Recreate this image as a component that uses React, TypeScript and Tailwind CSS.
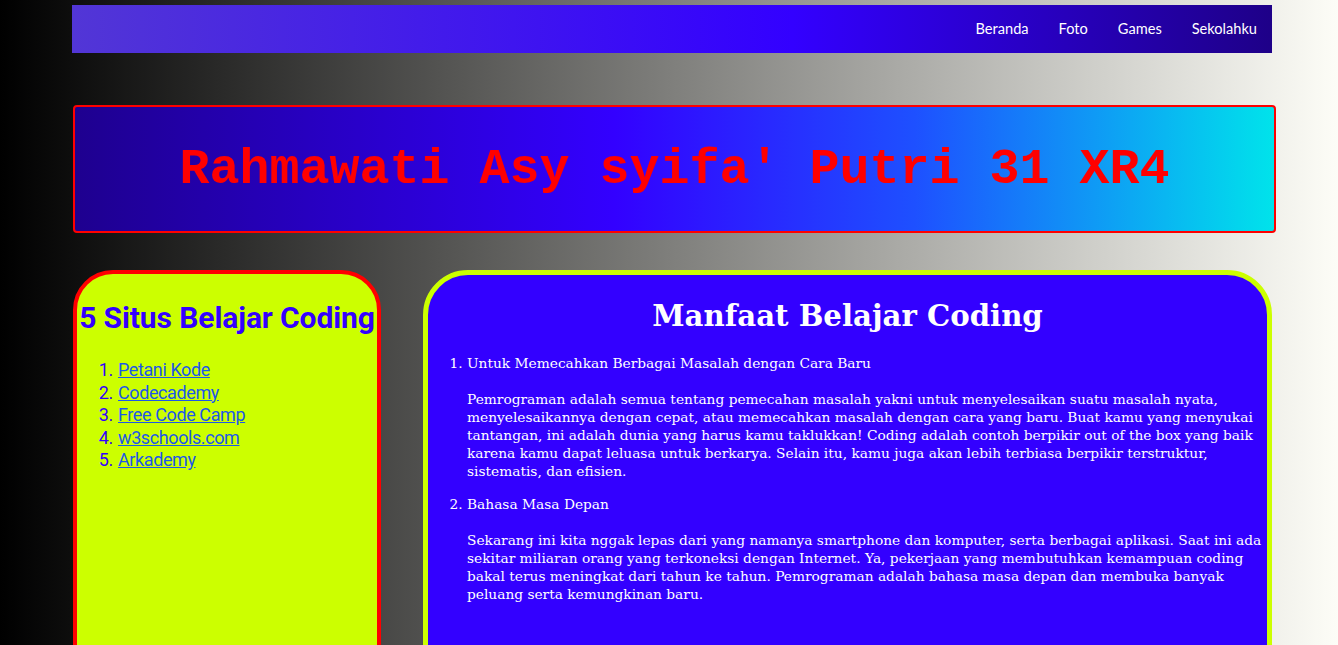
const navLinks = ["Beranda", "Foto", "Games", "Sekolahku"];

const sites = ["Petani Kode", "Codecademy", "Free Code Camp", "w3schools.com", "Arkademy"];

const App = () => {
  return (
    <div className="min-h-[645px] overflow-hidden bg-[linear-gradient(to_right,#000000,#fdfdf7)] pt-[5px]">
      <nav className="ml-[72px] flex h-[48px] w-[1200px] items-center justify-end bg-[linear-gradient(to_right,#5236d6,#3300ff_60%,#1e0088)]">
        {navLinks.map((link) => (
          <a
            key={link}
            href="#"
            className="px-[15px] font-['Lato','Liberation_Sans',sans-serif] text-[14.6px] text-white"
          >
            {link}
          </a>
        ))}
      </nav>

      <header className="ml-[73px] mt-[52px] flex h-[128px] w-[1203px] items-center justify-center rounded-[4px] border-2 border-[#ff0000] bg-[linear-gradient(to_right,#1e008f,#3300ff_45%,#1e50ff_70%,#00e3eb)]">
        <h1 className="font-['Liberation_Mono','Courier_New',monospace] text-[50px] font-bold text-[#ff0000]">
          Rahmawati Asy syifa' Putri 31 XR4
        </h1>
      </header>

      <div className="ml-[73px] mt-[37px] flex gap-[42px]">
        <aside className="h-[400px] w-[308px] rounded-t-[40px] border-4 border-[#ff0000] bg-[#ccff00] text-[#3300ff]">
          <h2 className="mt-[28px] whitespace-nowrap text-center font-['Roboto','Liberation_Sans',sans-serif] text-[30px] font-bold leading-[32px] tracking-[-0.1px]">
            5 Situs Belajar Coding
          </h2>
          <ol className="mt-[25px] list-decimal pl-[40px] font-['Roboto','Liberation_Sans',sans-serif] text-[18px] leading-[22.6px] tracking-[-0.4px]">
            {sites.map((site) => (
              <li key={site} className="pl-[1px]">
                <a href="#" className="text-[#1d58e8] underline">
                  {site}
                </a>
              </li>
            ))}
          </ol>
        </aside>

        <main className="h-[400px] w-[849px] rounded-t-[45px] border-[5px] border-[#ccff00] bg-[#3300ff] font-['DejaVu_Serif','Liberation_Serif',serif] text-white">
          <h2 className="mt-[23px] text-center text-[29.2px] font-bold leading-[36px]">Manfaat Belajar Coding</h2>
          <ol className="mt-[20px] list-decimal pl-[39px] text-[13.75px] leading-[18px]">
            <li>
              Untuk Memecahkan Berbagai Masalah dengan Cara Baru
              <p className="mt-[18px]">
                Pemrograman adalah semua tentang pemecahan masalah yakni untuk menyelesaikan suatu masalah nyata,
                menyelesaikannya dengan cepat, atau memecahkan masalah dengan cara yang baru. Buat kamu yang menyukai
                tantangan, ini adalah dunia yang harus kamu taklukkan! Coding adalah contoh berpikir out of the box yang
                baik karena kamu dapat leluasa untuk berkarya. Selain itu, kamu juga akan lebih terbiasa berpikir
                terstruktur, sistematis, dan efisien.
              </p>
            </li>
            <li className="mt-[15px]">
              Bahasa Masa Depan
              <p className="mt-[18px]">
                Sekarang ini kita nggak lepas dari yang namanya smartphone dan komputer, serta berbagai aplikasi. Saat
                ini ada sekitar miliaran orang yang terkoneksi dengan Internet. Ya, pekerjaan yang membutuhkan kemampuan
                coding bakal terus meningkat dari tahun ke tahun. Pemrograman adalah bahasa masa depan dan membuka banyak
                peluang serta kemungkinan baru.
              </p>
            </li>
          </ol>
        </main>
      </div>
    </div>
  );
};

export default App;
